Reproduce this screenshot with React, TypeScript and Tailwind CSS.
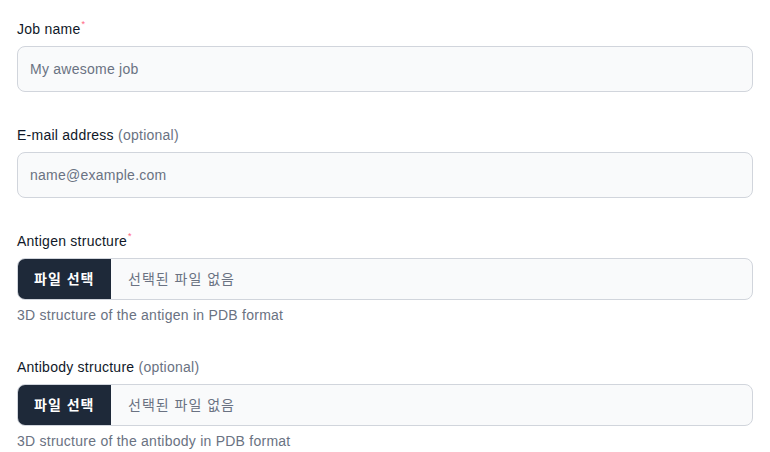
import React from "react";

const font = { fontFamily: '"Liberation Sans", "Noto Sans CJK KR", sans-serif' };

const Label: React.FC<{ text: string; required?: boolean }> = ({ text, required }) => (
  <label className="block mb-[7px] pt-px text-sm leading-5 tracking-[0.25px] text-gray-900">
    {text}
    {required ? (
      <sup className="relative -top-[7px] ml-px text-[9px] text-rose-400">*</sup>
    ) : (
      <span className="text-gray-500"> (optional)</span>
    )}
  </label>
);

const TextField: React.FC<{ label: string; placeholder: string; required?: boolean }> = ({ label, placeholder, required }) => (
  <div>
    <Label text={label} required={required} />
    <input
      type="text"
      placeholder={placeholder}
      className="block w-full rounded-lg border border-gray-300 bg-gray-50 p-3 text-sm leading-5 tracking-[0.25px] text-gray-900 placeholder:text-gray-500 outline-none"
    />
  </div>
);

const FileField: React.FC<{ label: string; help: string; required?: boolean }> = ({ label, help, required }) => (
  <div>
    <Label text={label} required={required} />
    <div className="flex w-full overflow-hidden rounded-lg border border-gray-300 bg-gray-50 text-sm leading-5 tracking-[1px]">
      <div className="w-[93px] bg-gray-800 py-2.5 pl-4 font-semibold text-white">파일 선택</div>
      <div className="py-2.5 pl-[17px] text-gray-500">선택된 파일 없음</div>
    </div>
    <p className="mt-[5px] h-[19px] text-sm leading-5 tracking-[0.25px] text-gray-500">{help}</p>
  </div>
);

const App: React.FC = () => {
  return (
    <div className="min-h-screen bg-white" style={font}>
      <form className="flex flex-col gap-8 px-[17px] pt-[18px]">
        <TextField label="Job name" placeholder="My awesome job" required />
        <TextField label="E-mail address" placeholder="name@example.com" />
        <FileField label="Antigen structure" help="3D structure of the antigen in PDB format" required />
        <FileField label="Antibody structure" help="3D structure of the antibody in PDB format" />
      </form>
    </div>
  );
};

export default App;
